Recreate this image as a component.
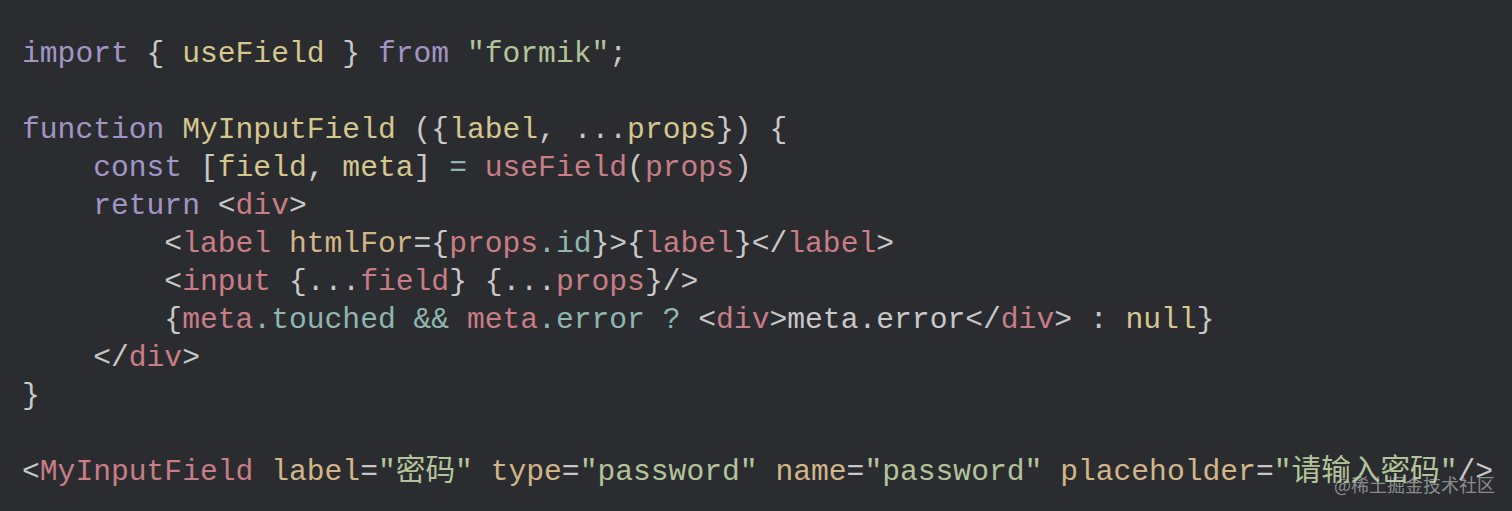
import type { ReactNode } from 'react';

type Tok = [string, string];

// colour classes for the syntax theme
const P = 'text-[#a295c6]'; // keyword
const Y = 'text-[#d5c78e]'; // identifier
const R = 'text-[#c97d86]'; // tag / expression
const T = 'text-[#8fb6b0]'; // member / operator
const G = 'text-[#c8c8c8]'; // punctuation
const S = 'text-[#b3c49a]'; // string
const A = 'text-[#d2b688]'; // attribute

const lines: Tok[][] = [
  [['import', P], [' { ', G], ['useField', Y], [' } ', G], ['from', P], [' ', G], ['"formik"', S], [';', G]],
  [],
  [['function', P], [' ', G], ['MyInputField', Y], [' ({', G], ['label', Y], [', ...', G], ['props', Y], ['}) {', G]],
  [['    ', G], ['const', P], [' [', G], ['field', Y], [', ', G], ['meta', Y], ['] ', G], ['=', T], [' ', G], ['useField', R], ['(', G], ['props', R], [')', G]],
  [['    ', G], ['return', P], [' <', G], ['div', R], ['>', G]],
  [['        <', G], ['label', R], [' ', G], ['htmlFor', A], ['={', G], ['props', R], ['.id', T], ['}>{', G], ['label', R], ['}</', G], ['label', R], ['>', G]],
  [['        <', G], ['input', R], [' {...', G], ['field', R], ['} {...', G], ['props', R], ['}/>', G]],
  [['        {', G], ['meta', R], ['.touched && ', T], ['meta', R], ['.error ? ', T], ['<', G], ['div', R], ['>meta.error</', G], ['div', R], ['> : ', G], ['null', Y], ['}', G]],
  [['    </', G], ['div', R], ['>', G]],
  [['}', G]],
  [],
  [['<', G], ['MyInputField', R], [' ', G], ['label', A], ['=', G], ['"密码"', S], [' ', G], ['type', A], ['=', G], ['"password"', S], [' ', G], ['name', A], ['=', G], ['"password"', S], [' ', G], ['placeholder', A], ['=', G], ['"请输入密码"', S], ['/>', G]],
];

function Line({ toks }: { toks: Tok[] }): ReactNode {
  return (
    <div className="h-[38px] whitespace-pre">
      {toks.length === 0 ? ' ' : toks.map(([t, c], i) => (
        <span key={i} className={c}>{t}</span>
      ))}
    </div>
  );
}

export default function App() {
  return (
    <div className="relative w-full h-[511px] overflow-hidden bg-[#2b2c30]">
      <div
        className="pt-[35px] pl-[22px] text-[29.66px] leading-[38px]"
        style={{ fontFamily: '"Liberation Mono", "Noto Sans CJK SC", monospace' }}
      >
        {lines.map((l, i) => <Line key={i} toks={l} />)}
      </div>

      {/* watermark sits over the last line, as in the capture */}
      <div
        className="absolute right-[17px] bottom-[18px] text-[18px] leading-none text-[#c4c4c4]/65"
        style={{ fontFamily: '"Noto Sans CJK SC", sans-serif' }}
      >
        @稀土掘金技术社区
      </div>
    </div>
  );
}
